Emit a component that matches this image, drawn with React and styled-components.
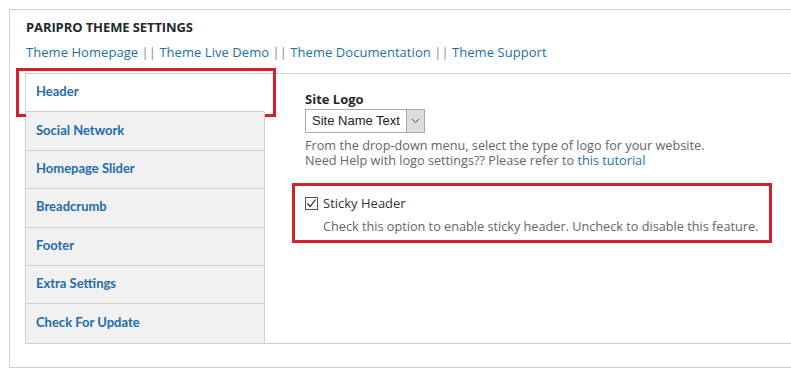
import React from "react";
import styled, { createGlobalStyle } from "styled-components";

const Global = createGlobalStyle`
  html, body { margin: 0; padding: 0; background: #fff; overflow: hidden; }
  body { font-family: "Open Sans", "Liberation Sans", sans-serif; }
`;

const Page = styled.div`
  margin: 9px 0 0 9px;
  width: 820px;
  border: 1px solid #cfcfcf;
  padding: 9px 0 23px 15px;
  box-sizing: border-box;
  background: #fff;
`;

const Title = styled.h2`
  margin: 0 0 0 1px;
  font-family: "Open Sans", sans-serif;
  font-weight: 700;
  font-size: 13px;
  line-height: 16px;
  color: #23282d;
  text-transform: uppercase;
  letter-spacing: -0.1px;
`;

const Links = styled.div`
  margin: 8px 0 0 1px;
  font-size: 13px;
  line-height: 18px;
  color: #8a8a8a;
  letter-spacing: 0.05px;
`;

const Link = styled.a`
  color: #1e6fa8;
  text-decoration: none;
`;

const Panel = styled.div`
  display: flex;
  margin-top: 12px;
  border-top: 1px solid #cfcfcf;
  border-bottom: 1px solid #cfcfcf;
`;

const TabList = styled.div`
  width: 240px;
  flex: none;
  display: flex;
  flex-direction: column;
  border-left: 1px solid #cfcfcf;
  box-sizing: border-box;
`;

const Tab = styled.div`
  position: relative;
  height: 38.4px;
  box-sizing: border-box;
  display: flex;
  align-items: center;
  padding: 0 0 3px 10px;
  background: ${(p) => (p.$active ? "#fff" : "#f1f1f1")};
  border-right: 1px solid ${(p) => (p.$active ? "transparent" : "#cfcfcf")};
  border-bottom: ${(p) => (p.$last ? "none" : "1px solid #cfcfcf")};
  font-family: "Lato", sans-serif;
  font-weight: 700;
  font-size: 13px;
  color: #1f6bab;
`;

const Highlight = styled.span`
  position: absolute;
  left: -10px;
  top: -6px;
  width: 260px;
  height: 49px;
  border: 3px solid #d3202c;
  box-sizing: border-box;
  pointer-events: none;
`;

const Content = styled.div`
  flex: 1;
  padding: 16px 0 0 40px;
`;

const Label = styled.div`
  font-weight: 700;
  font-size: 13px;
  line-height: 18px;
  color: #23282d;
`;

const Select = styled.div`
  margin-top: 1px;
  display: flex;
  width: 120px;
  height: 24px;
  box-sizing: border-box;
  border: 1px solid #a9a9a9;
  background: #fff;
`;

const SelectText = styled.span`
  flex: 1;
  min-width: 0;
  white-space: nowrap;
  overflow: hidden;
  padding-left: 6px;
  font-family: "Liberation Sans", Arial, sans-serif;
  font-size: 13px;
  line-height: 22px;
  color: #222;
`;

const SelectArrow = styled.span`
  flex: none;
  width: 17px;
  border-left: 1px solid #a9a9a9;
  background: #dedede;
  display: flex;
  align-items: center;
  justify-content: center;
`;

const Help = styled.p`
  margin: 5px 0 0;
  font-size: 12.7px;
  line-height: 15px;
  color: #666;
`;

const Boxed = styled.div`
  margin: 15px 0 0 -13px;
  width: 480px;
  height: 60px;
  box-sizing: border-box;
  border: 3px solid #d3202c;
  padding: 8px 0 0 10px;
`;

const CheckRow = styled.div`
  display: flex;
  align-items: center;
  gap: 5px;
  font-size: 13px;
  line-height: 18px;
  color: #333;
`;

const CheckBox = styled.span`
  width: 13px;
  height: 13px;
  box-sizing: border-box;
  border: 1px solid #555;
  background: #fff;
  display: flex;
  align-items: center;
  justify-content: center;
`;

const CheckHelp = styled.div`
  margin: 6px 0 0 18px;
  font-size: 12.7px;
  line-height: 16px;
  color: #666;
`;

const tabs = [
  "Header",
  "Social Network",
  "Homepage Slider",
  "Breadcrumb",
  "Footer",
  "Extra Settings",
  "Check For Update",
];

export default function App() {
  return (
    <>
      <Global />
      <Page>
        <Title>Paripro Theme Settings</Title>
        <Links>
          <Link href="#">Theme Homepage</Link> || <Link href="#">Theme Live Demo</Link> ||{" "}
          <Link href="#">Theme Documentation</Link> || <Link href="#">Theme Support</Link>
        </Links>
        <Panel>
          <TabList>
            {tabs.map((t, i) => (
              <Tab key={t} $active={i === 0} $last={i === tabs.length - 1}>
                {t}
                {i === 0 && <Highlight />}
              </Tab>
            ))}
          </TabList>
          <Content>
            <Label>Site Logo</Label>
            <Select>
              <SelectText>Site Name Text</SelectText>
              <SelectArrow>
                <svg width="9" height="6" viewBox="0 0 9 6">
                  <path d="M1 1 L4.5 4.5 L8 1" fill="none" stroke="#444" strokeWidth="1" />
                </svg>
              </SelectArrow>
            </Select>
            <Help>
              From the drop-down menu, select the type of logo for your website.
              <br />
              Need Help with logo settings?? Please refer to <Link href="#">this tutorial</Link>
            </Help>
            <Boxed>
              <CheckRow>
                <CheckBox>
                  <svg width="11" height="11" viewBox="0 0 11 11">
                    <path d="M1.5 5.5 L4.2 8.5 L9.5 1.5" fill="none" stroke="#222" strokeWidth="1.2" />
                  </svg>
                </CheckBox>
                Sticky Header
              </CheckRow>
              <CheckHelp>
                Check this option to enable sticky header. Uncheck to disable this feature.
              </CheckHelp>
            </Boxed>
          </Content>
        </Panel>
      </Page>
    </>
  );
}
